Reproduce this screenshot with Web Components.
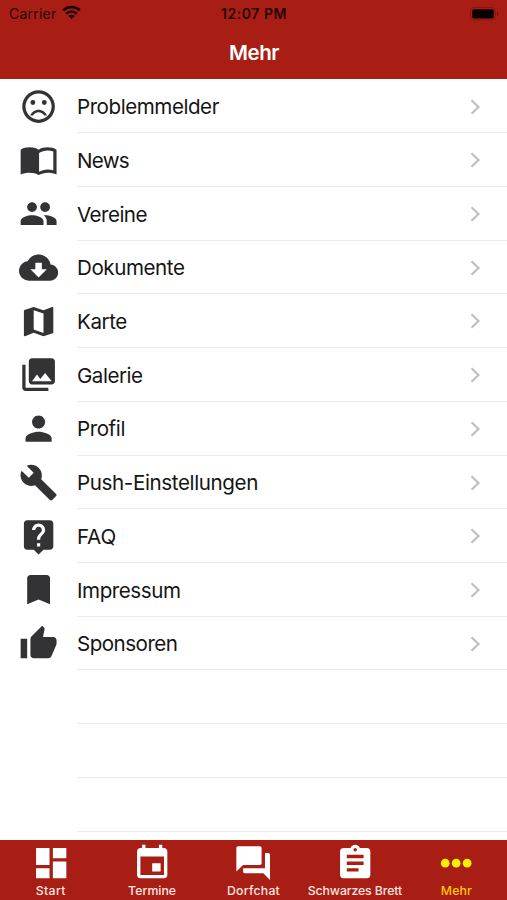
<!DOCTYPE html>
<html lang="de">
<head>
<meta charset="utf-8">
<title>Mehr</title>
<style>
html,body{margin:0;height:100%;background:#fff;overflow:hidden}
body{font-family:Inter,"Liberation Sans",sans-serif}
</style>
</head>
<body>
<more-screen></more-screen>
<script>
const ICONS = {
  sad: '<path d="M15.5 8a1.5 1.5 0 1 1 0 3 1.5 1.5 0 0 1 0-3zM8.5 8a1.5 1.5 0 1 1 0 3 1.5 1.5 0 0 1 0-3zM12 14c-2.33 0-4.32 1.45-5.12 3.5h1.67c.69-1.19 1.97-2 3.45-2s2.75.81 3.45 2h1.67c-.8-2.05-2.79-3.5-5.12-3.5zM11.99 2C6.47 2 2 6.48 2 12s4.47 10 9.99 10C17.52 22 22 17.52 22 12S17.52 2 11.99 2zM12 20c-4.42 0-8-3.58-8-8s3.58-8 8-8 8 3.58 8 8-3.58 8-8 8z"/>',
  book: '<path fill-rule="evenodd" d="M1 6c1.450-1.100 3.550-1.500 5.500-1.500S10.550 4.900 12 6c1.450-1.100 3.550-1.500 5.500-1.500S21.550 4.900 23 6v15.100c-1.600-.8-3.600-1.100-5.500-1.100-1.700 0-4.150.65-5.500 1.500C10.550 20.400 8.450 20 6.500 20c-1.900 0-3.900.3-5.500 1.100zM12.300 8v11.500c1.350-.85 3.500-1.500 5.200-1.500 1.200 0 2.400.15 3.500.5V7c-1.100-.35-2.300-.5-3.500-.5-1.700 0-3.850.65-5.200 1.500z"/>',
  people: '<path d="M16 11c1.66 0 2.99-1.34 2.99-3S17.660 5 16 5s-3 1.340-3 3 1.340 3 3 3zm-8 0c1.660 0 2.990-1.340 2.990-3S9.660 5 8 5 5 6.340 5 8s1.340 3 3 3zm0 2c-2.330 0-7 1.170-7 3.500V19h14v-2.500C15 14.170 10.330 13 8 13zm8 0c-.29 0-.62.02-.97.05 1.160.84 1.970 1.970 1.970 3.450V19h6v-2.500c0-2.330-4.670-3.500-7-3.500z"/>',
  cloud: '<path d="M19.350 10.040C18.670 6.590 15.640 4 12 4 9.110 4 6.600 5.640 5.350 8.040 2.340 8.360 0 10.910 0 14c0 3.310 2.690 6 6 6h13c2.760 0 5-2.240 5-5 0-2.640-2.050-4.780-4.650-4.960zM17 13l-5 5-5-5h3V9h4v4h3z"/>',
  map: '<path d="M20.500 3l-.16.03L15 5.100 9 3 3.360 4.900c-.21.07-.36.25-.36.48V20.500c0 .28.22.5.5.5l.16-.03L9 18.900l6 2.100 5.640-1.900c.21-.07.36-.25.36-.48V3.500c0-.28-.22-.5-.5-.5zM15 19l-6-2.110V5l6 2.110V19z"/>',
  gallery: '<path d="M22 16V4c0-1.100-.9-2-2-2H8c-1.100 0-2 .9-2 2v12c0 1.100.9 2 2 2h12c1.100 0 2-.9 2-2zm-11-4l2.030 2.710L16 11l4 5H8l3-4zM2 6v14c0 1.100.9 2 2 2h14v-2H4V6H2z"/>',
  person: '<path d="M12 12c2.210 0 4-1.790 4-4s-1.790-4-4-4-4 1.790-4 4 1.790 4 4 4zm0 2c-2.670 0-8 1.340-8 4v2h16v-2c0-2.660-5.330-4-8-4z"/>',
  build: '<path d="M22.700 19l-9.100-9.100c.9-2.300.4-5-1.500-6.900-2-2-5-2.400-7.400-1.300L9 6 6 9 1.600 4.700C.4 7.100.9 10.100 2.900 12.100c1.900 1.900 4.600 2.400 6.900 1.500l9.100 9.100c.4.4 1 .4 1.400 0l2.300-2.300c.5-.4.5-1.100.1-1.400z"/>',
  help: '<path d="M19 2H5c-1.110 0-2 .9-2 2v14c0 1.100.89 2 2 2h4l3 3 3-3h4c1.100 0 2-.9 2-2V4c0-1.100-.9-2-2-2zm-6 16h-2v-2h2v2zm2.070-7.750l-.9.92C13.450 11.900 13 12.500 13 14h-2v-.5c0-1.100.45-2.100 1.170-2.830l1.240-1.260c.37-.36.59-.86.59-1.410 0-1.100-.9-2-2-2s-2 .9-2 2H8c0-2.210 1.790-4 4-4s4 1.790 4 4c0 .88-.36 1.680-.93 2.250z"/>',
  bookmark: '<path d="M17 3H7c-1.100 0-1.990.9-1.990 2L5 21l7-3 7 3V5c0-1.100-.9-2-2-2z"/>',
  thumb: '<path d="M1 21h4V9H1v12zm22-11c0-1.100-.9-2-2-2h-6.310l.95-4.570.03-.32c0-.41-.17-.79-.44-1.060L14.170 1 7.590 7.590C7.220 7.950 7 8.450 7 9v10c0 1.100.9 2 2 2h9c.83 0 1.540-.5 1.840-1.220l3.020-7.050c.09-.23.14-.47.14-.73v-2z"/>',
  dashboard: '<path d="M3 13h8V3H3v10zm0 8h8v-6H3v6zm10 0h8V11h-8v10zm0-18v6h8V3h-8z"/>',
  event: '<path d="M17 12h-5v5h5v-5zM16 1v2H8V1H6v2H5c-1.110 0-1.990.9-1.990 2L3 19c0 1.100.89 2 2 2h14c1.100 0 2-.9 2-2V5c0-1.100-.9-2-2-2h-1V1h-2zm3 18H5V8h14v11z"/>',
  chat: '<path d="M21 6h-2v9H6v2c0 .55.45 1 1 1h11l4 4V7c0-.55-.45-1-1-1zm-4 6V3c0-.55-.45-1-1-1H3c-.55 0-1 .45-1 1v14l4-4h10c.55 0 1-.45 1-1z"/>',
  board: '<path d="M19 3h-4.180C14.400 1.840 13.300 1 12 1c-1.300 0-2.400.84-2.820 2H5c-1.100 0-2 .9-2 2v14c0 1.100.9 2 2 2h14c1.100 0 2-.9 2-2V5c0-1.100-.9-2-2-2zm-7 0c.55 0 1 .45 1 1s-.45 1-1 1-1-.45-1-1 .45-1 1-1zm2 14H7v-2h7v2zm3-4H7v-2h10v2zm0-4H7V7h10v2z"/>',
  dots: '<circle cx="5.500" cy="12" r="2.600"/><circle cx="12" cy="12" r="2.600"/><circle cx="18.500" cy="12" r="2.600"/>'
};

class AppIcon extends HTMLElement {
  connectedCallback() {
    this.attachShadow({mode: 'open'}).innerHTML =
      `<style>:host{display:block;flex:none;width:var(--icon,39.200px);height:var(--icon,39.200px)}svg{display:block;width:100%;height:100%;fill:currentColor}</style>
      <svg viewBox="0 0 24 24">${ICONS[this.getAttribute('name')]}</svg>`;
  }
}
customElements.define('app-icon', AppIcon);

// A single line of text whose tracking is adjusted so that it spans the given width.
class FitText extends HTMLElement {
  connectedCallback() {
    this.attachShadow({mode: 'open'}).innerHTML =
      `<style>:host{display:inline-block;white-space:nowrap}span{display:inline-block}</style><span><slot></slot></span>`;
    const span = this.shadowRoot.querySelector('span');
    const n = this.textContent.length;
    const gap = (Number(this.getAttribute('width')) - span.getBoundingClientRect().width) / n;
    span.style.letterSpacing = gap.toFixed(3) + 'px';
  }
}
customElements.define('fit-text', FitText);

class StatusBar extends HTMLElement {
  connectedCallback() {
    this.attachShadow({mode: 'open'}).innerHTML = `
    <style>
      :host{display:grid;grid-template-columns:1fr auto 1fr;align-items:center;height:27px;padding:0 8px 0 9px;color:#260503;font-size:14px}
      .left{display:flex;align-items:center;gap:5px}
      .time{font-weight:600}
      svg{display:block}
      .left svg{margin-top:-2px}
      .battery{justify-self:end}
    </style>
    <div class="left"><fit-text width="47.500">Carrier</fit-text>
      <svg width="19" height="15" viewBox="0 0 19 15" fill="none" stroke="#1b0202" stroke-width="2.600"><path d="M1.200 5.400C5.900.9 13.100.9 17.800 5.400M4.200 8.700c3-2.900 7.600-2.900 10.600 0"/><path d="M6.300 10.900c1.800-1.700 4.600-1.700 6.400 0L9.500 14.100z" fill="#1b0202" stroke="none"/></svg>
    </div>
    <fit-text class="time" width="66">12:07 PM</fit-text>
    <svg class="battery" width="29" height="14" viewBox="0 0 29 14"><rect x=".6" y=".6" width="24.800" height="12.400" rx="3.500" fill="none" stroke="#86160f"/><rect x="2.200" y="2.200" width="21.600" height="9.200" rx="2" fill="#080000"/><path d="M27 4.800c1.700.5 1.700 3.500 0 4z" fill="#6d120c"/></svg>`;
  }
}
customElements.define('status-bar', StatusBar);

class NavHeader extends HTMLElement {
  connectedCallback() {
    this.attachShadow({mode: 'open'}).innerHTML = `
    <style>
      :host{display:block;flex:none;height:79px;background:#a91e14}
      .title{height:50px;padding-left:1px;display:flex;align-items:center;justify-content:center;color:#fff;font-size:20.500px;font-weight:600}
    </style>
    <status-bar></status-bar><div class="title"><slot></slot></div>`;
  }
}
customElements.define('nav-header', NavHeader);

class MenuRow extends HTMLElement {
  connectedCallback() {
    const icon = this.getAttribute('icon');
    this.attachShadow({mode: 'open'}).innerHTML = `
    <style>
      :host{display:flex;align-items:center;box-sizing:border-box;height:53.720px;padding-left:19.200px;gap:18.600px;color:#333335}
      .space{width:39.200px;flex:none}
      .body{flex:1;height:100%;box-sizing:border-box;padding-top:1.500px;border-bottom:1.500px solid #ebebec;display:flex;align-items:center;justify-content:space-between;padding-right:26px;color:#151515;font-size:20.600px}
      svg{display:block}
    </style>
    ${icon ? `<app-icon name="${icon}"></app-icon>` : '<div class="space"></div>'}
    <div class="body"><slot></slot>${icon ? '<svg width="11" height="16" viewBox="0 0 11 16" fill="none" stroke="#bfbfc2" stroke-width="2.200"><path d="M1.500 1.300 8.500 8l-7 6.700"/></svg>' : ''}</div>`;
  }
}
customElements.define('menu-row', MenuRow);

class TabItem extends HTMLElement {
  connectedCallback() {
    this.attachShadow({mode: 'open'}).innerHTML = `
    <style>
      :host{--icon:40.400px;flex:1 1 0;min-width:0;display:flex;flex-direction:column;align-items:center;padding-top:3px;color:#fff}
      :host([active]){color:#fff000}
      .label{height:16px;line-height:16px;font-size:12.300px;font-weight:500;color:#ffe5e0}
      :host([active]) .label{color:#ffc800}
    </style>
    <app-icon name="${this.getAttribute('icon')}"></app-icon><div class="label"><slot></slot></div>`;
  }
}
customElements.define('tab-item', TabItem);

class TabBar extends HTMLElement {
  connectedCallback() {
    this.attachShadow({mode: 'open'}).innerHTML =
      `<style>:host{display:flex;flex:none;height:60px;background:#a91e14}</style><slot></slot>`;
  }
}
customElements.define('tab-bar', TabBar);

class MoreScreen extends HTMLElement {
  connectedCallback() {
    const rows = [['sad','Problemmelder',142],['book','News',52],['people','Vereine',70],['cloud','Dokumente',107.500],['map','Karte',50],['gallery','Galerie',65.500],['person','Profil',48],['build','Push-Einstellungen',181],['help','FAQ',39],['bookmark','Impressum',103.500],['thumb','Sponsoren',100.500]];
    const tabs = [['dashboard','Start',30],['event','Termine',48],['chat','Dorfchat',53],['board','Schwarzes Brett',94.500],['dots','Mehr',31]];
    this.attachShadow({mode: 'open'}).innerHTML = `
    <style>
      :host{display:flex;flex-direction:column;height:900px;width:507px;background:#fff}
      .list{flex:1;min-height:0;overflow:hidden;padding-top:.5px}
    </style>
    <nav-header><fit-text width="50">Mehr</fit-text></nav-header>
    <div class="list">${rows.map(([i, t, w]) => `<menu-row icon="${i}"><fit-text width="${w}">${t}</fit-text></menu-row>`).join('')}<menu-row></menu-row><menu-row></menu-row><menu-row></menu-row></div>
    <tab-bar>${tabs.map(([i, t, w], k) => `<tab-item icon="${i}"${k === 4 ? ' active' : ''}><fit-text width="${w}">${t}</fit-text></tab-item>`).join('')}</tab-bar>`;
  }
}
customElements.define('more-screen', MoreScreen);
</script>
</body>
</html>
